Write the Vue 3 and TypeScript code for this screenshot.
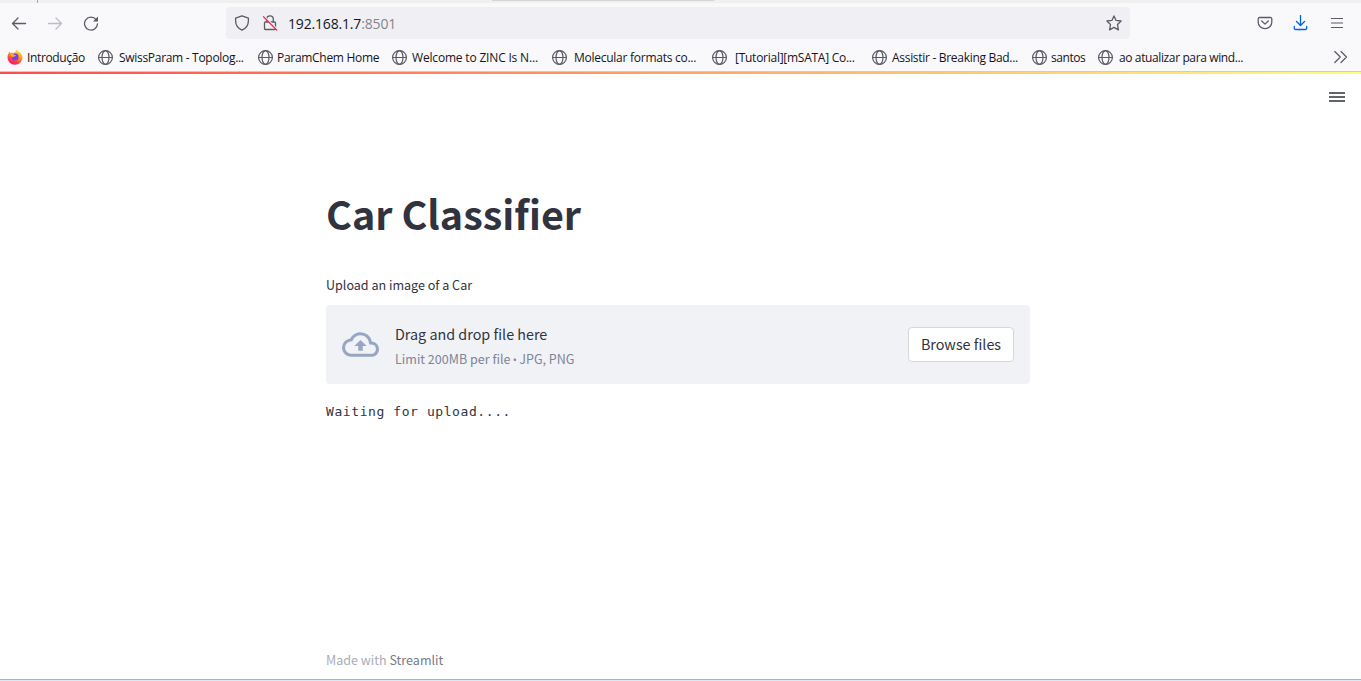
<script setup lang="ts">
interface Bookmark {
  label: string
  width: number
  gap: number
  spacing: number
  firefox?: boolean
}

const bookmarks: Bookmark[] = [
  { label: 'Introdução', width: 91, gap: 4, spacing: -0.36, firefox: true },
  { label: 'SwissParam - Topolog...', width: 160, gap: 5, spacing: -0.3 },
  { label: 'ParamChem Home', width: 134, gap: 3, spacing: -0.3 },
  { label: 'Welcome to ZINC Is N...', width: 160, gap: 4, spacing: -0.18 },
  { label: 'Molecular formats co...', width: 160, gap: 6, spacing: -0.26 },
  { label: '[Tutorial][mSATA] Co...', width: 160, gap: 7, spacing: -0.26 },
  { label: 'Assistir - Breaking Bad...', width: 160, gap: 4, spacing: -0.3 },
  { label: 'santos', width: 66, gap: 3, spacing: -0.45 },
  { label: 'ao atualizar para wind...', width: 160, gap: 5, spacing: -0.38 },
]
</script>

<template>
  <div class="window">
    <div class="tabstrip"><i class="divider"></i><i class="active-tab"></i></div>
    <header class="chrome">
      <nav class="toolbar">
        <svg class="icon back" viewBox="0 0 16 16"><path d="M14.500 8.500H1.500M7 3 1.500 8.500 7 14" /></svg>
        <svg class="icon forward" viewBox="0 0 16 16"><path d="M1.500 8.500h13M9 3l5.500 5.500L9 14" /></svg>
        <svg class="icon reload" viewBox="0 0 16 16">
          <path d="M13.200 4.700A6.500 6.500 0 1 0 14.500 8.800" />
          <path class="solid" d="M15 1.500v5h-5z" />
        </svg>
        <div class="urlbar">
          <svg class="icon shield" viewBox="0 0 16 16"><path d="M8 .9 14.400 3.200v2.500c0 4-2.500 7.600-6.400 9.500-3.900-1.900-6.400-5.500-6.400-9.500V3.200z" /></svg>
          <svg class="icon lock" viewBox="0 0 16 16">
            <path d="M4.700 7V4.200a3.300 3.300 0 0 1 6.600 0V7M3.500 7h9a1 1 0 0 1 1 1v5.500a1 1 0 0 1-1 1h-9a1 1 0 0 1-1-1V8a1 1 0 0 1 1-1z" />
            <path class="slash-gap" d="M2.500 1.500 15.300 14.300" />
            <path class="slash" d="M1.500 1.800 14.700 15" />
          </svg>
          <span class="url">192.168.1.7<span class="port">:8501</span></span>
          <svg class="icon star" viewBox="0 0 16 16"><path d="m8 .9 2.100 4.500 5 .6-3.600 3.500.9 5.400L8 12.400l-4.400 2.500.9-5.400L.9 6l5-.6z" /></svg>
        </div>
        <svg class="icon pocket" viewBox="0 0 16 16"><path d="M2.500 2.500h11a1.300 1.300 0 0 1 1.300 1.300v3.500a6.800 6.300 0 0 1-13.600 0V3.800a1.300 1.300 0 0 1 1.300-1.300zM4.700 6 8 9.100 11.300 6" /></svg>
        <svg class="icon download" viewBox="0 0 16 16"><path d="M7.500 .5v10M3.500 6.500l4 4 4-4M1.300 11.500v1.700a1.300 1.300 0 0 0 1.300 1.300h9.800a1.300 1.300 0 0 0 1.300-1.300v-1.700" /></svg>
        <svg class="icon menu" viewBox="0 0 16 16"><path d="M2.500 3.500h11M2.500 8h11M2.500 12.500h11" /></svg>
      </nav>
      <div class="bookmarks">
        <a v-for="b in bookmarks" :key="b.label" class="bookmark" :style="{ width: b.width + 'px', gap: b.gap + 'px' }">
          <svg v-if="b.firefox" class="fx" viewBox="0 0 16 16">
            <defs>
              <linearGradient id="flame" x1=".8" y1="0" x2=".3" y2="1">
                <stop offset="0" stop-color="#fff04a" />
                <stop offset=".45" stop-color="#ff980e" />
                <stop offset=".75" stop-color="#ff3750" />
                <stop offset="1" stop-color="#f01878" />
              </linearGradient>
            </defs>
            <path fill="url(#flame)" d="M9.800 .2c1 1 1.600 1.700 1.900 2.800C12.500 3 13.500 3.500 14 4.500c1 1.200 1.500 2.500 1.500 4A7.400 7.300 0 0 1 8 15.800 7.400 7.300 0 0 1 .5 8.500C.5 6 1.500 4.200 2.700 2.300c.1.700.4 1.400.8 2 1-.5 2-.6 3-.2C7.900 3.600 9.600 2 9.800 .2z" />
            <circle cx="8.200" cy="7.900" r="3.400" fill="#7542e5" />
            <path fill="#ffa52a" d="M3.200 5.200c1.600-.9 3.300-.4 4.200.7h1.500c-.2 1.300-1.800 1.300-2.400 2.200-1.300-.2-2.700-1-3.300-2.900z" />
          </svg>
          <svg v-else class="icon globe" viewBox="0 0 16 16"><circle cx="7.500" cy="8.500" r="6.900" /><ellipse cx="7.500" cy="8.500" rx="3.500" ry="6.900" /><path d="M.6 8.500h13.800" /></svg>
          <span class="name" :style="{ letterSpacing: b.spacing + 'px' }">{{ b.label }}</span>
        </a>
        <svg class="icon overflow" viewBox="0 0 16 16"><path d="m1.800 2.500 5.500 5.500-5.500 5.500M8 2.500 13.500 8 8 13.500" /></svg>
      </div>
    </header>
    <div class="decoration"></div>
    <main class="app">
      <svg class="app-menu" viewBox="0 0 16 12"><path d="M0 2h16M0 6h16M0 10h16" /></svg>
      <section class="content">
        <h1>Car Classifier</h1>
        <label>Upload an image of a Car</label>
        <div class="dropzone">
          <svg class="cloud" viewBox="0 0 24 24"><path d="M19.350 10.040A7.490 7.490 0 0 0 12 4C9.110 4 6.600 5.640 5.350 8.040A5.994 5.994 0 0 0 0 14c0 3.310 2.690 6 6 6h13c2.760 0 5-2.240 5-5 0-2.640-2.050-4.780-4.650-4.960zM19 18H6c-2.210 0-4-1.790-4-4 0-2.050 1.530-3.760 3.560-3.970l1.070-.11.5-.95A5.469 5.469 0 0 1 12 6c2.620 0 4.880 1.860 5.390 4.430l.3 1.500 1.530.11A2.980 2.980 0 0 1 22 15c0 1.650-1.350 3-3 3zM8 13h2.550v3h2.900v-3H16l-4-4z" /></svg>
          <div class="instructions">
            <span class="title">Drag and drop file here</span>
            <small>Limit 200MB per file <span class="dot">•</span> JPG, PNG</small>
          </div>
          <button type="button">Browse files</button>
        </div>
        <div class="status">Waiting for upload....</div>
      </section>
      <footer>Made with <a>Streamlit</a></footer>
    </main>
    <div class="window-edge"></div>
  </div>
</template>

<style>
body { margin: 0; overflow: hidden; }
</style>

<style scoped>
* { box-sizing: border-box; }
.window { width: 1361px; height: 681px; display: flex; flex-direction: column; overflow: hidden; background: #fff; font-family: "Noto Sans CJK SC", "Noto Sans", sans-serif; color: #31333f; }
.tabstrip { height: 3px; flex: none; background: #f0f0f0; display: flex; }
.divider { width: 1px; height: 3px; margin-left: 37px; background: #aaa; }
.active-tab { width: 222px; height: 1px; margin-left: 454px; background: #d4d4d4; }
.chrome { height: 69px; flex: none; background: #f9f9fb; border-bottom: 1px solid #ccccd0; font-family: "Open Sans", "Noto Sans", sans-serif; }
.toolbar { height: 40px; display: flex; align-items: center; padding-left: 11px; }
.icon { width: 16px; height: 16px; flex: none; fill: none; stroke: #5b5b66; stroke-width: 1.3; stroke-linecap: round; stroke-linejoin: round; }
.forward { margin-left: 20px; stroke: #bcbcc2; }
.reload { margin-left: 20px; }
.solid { fill: #5b5b66; stroke: none; }
.urlbar { width: 904px; height: 32px; margin-left: 127px; padding: 0 8px; display: flex; align-items: center; border-radius: 4px; background: #f0f0f4; }
.lock { margin-left: 12px; }
.slash-gap { stroke: #f0f0f4; }
.slash { stroke: #f0305a; }
.url { margin-left: 10px; padding-top: 2px; font-size: 14px; line-height: 20px; color: #15141a; letter-spacing: -0.17px; }
.port { color: #85848c; }
.star { margin-left: auto; }
.pocket { margin-left: 127px; }
.download { margin-left: 20px; stroke: #0061e0; }
.menu { margin-left: 20px; stroke-width: 1.2; }
.bookmarks { height: 28px; display: flex; align-items: center; padding-left: 7px; }
.bookmark { height: 28px; flex: none; display: flex; align-items: center; font-size: 12px; line-height: 18px; color: #15141a; white-space: pre; }
.name { padding-top: 2px; }
.fx { width: 16px; height: 16px; flex: none; }
.globe { stroke-width: 1.2; }
.overflow { margin-left: 75px; stroke-width: 1.2; }
.decoration { height: 2px; flex: none; background: linear-gradient(90deg, #ff4b4b, #fffd80); }
.app { flex: 1; display: flex; flex-direction: column; position: relative; }
.app-menu { position: absolute; left: 1329px; top: 17px; width: 16px; height: 12px; stroke: #31333f; stroke-width: 1.7; }
.content { width: 704px; margin: 109px 0 0 326px; display: flex; flex-direction: column; }
h1 { margin: 0; height: 60px; line-height: 60px; font-size: 39.500px; font-weight: 700; white-space: nowrap; }
label { height: 20px; margin-top: 32px; font-size: 12.550px; line-height: 20px; }
.dropzone { height: 79px; margin-top: 10px; padding: 0 16px; display: flex; align-items: center; border-radius: 4px; background: #f0f2f6; }
.cloud { width: 37px; height: 37px; fill: #97a6c3; }
.instructions { display: flex; flex-direction: column; margin-left: 16px; padding-top: 2px; }
.title { font-size: 14.350px; line-height: 26px; }
small { font-size: 12.550px; line-height: 23px; color: #808495; white-space: nowrap; }
.dot { font-family: "Open Sans", sans-serif; font-size: 11px; line-height: 1; margin: 0 -0.500px; }
button { width: 106px; height: 35px; margin-left: auto; padding: 0; border: 1px solid #d6d7d9; border-radius: 4px; background: #fff; color: #31333f; font-family: inherit; font-size: 14.350px; line-height: 30px; padding-bottom: 2px; }
.status { margin-top: 17px; height: 22px; line-height: 22px; font-family: "DejaVu Sans Mono", monospace; font-size: 13px; letter-spacing: 0.580px; }
footer { margin: auto 0 9px 326px; font-size: 12.550px; line-height: 20px; color: #abacb4; }
footer a { color: #797b85; }
.window-edge { height: 2px; flex: none; background: #dce8f4; border-top: 1px solid #a4b4c4; }
</style>
